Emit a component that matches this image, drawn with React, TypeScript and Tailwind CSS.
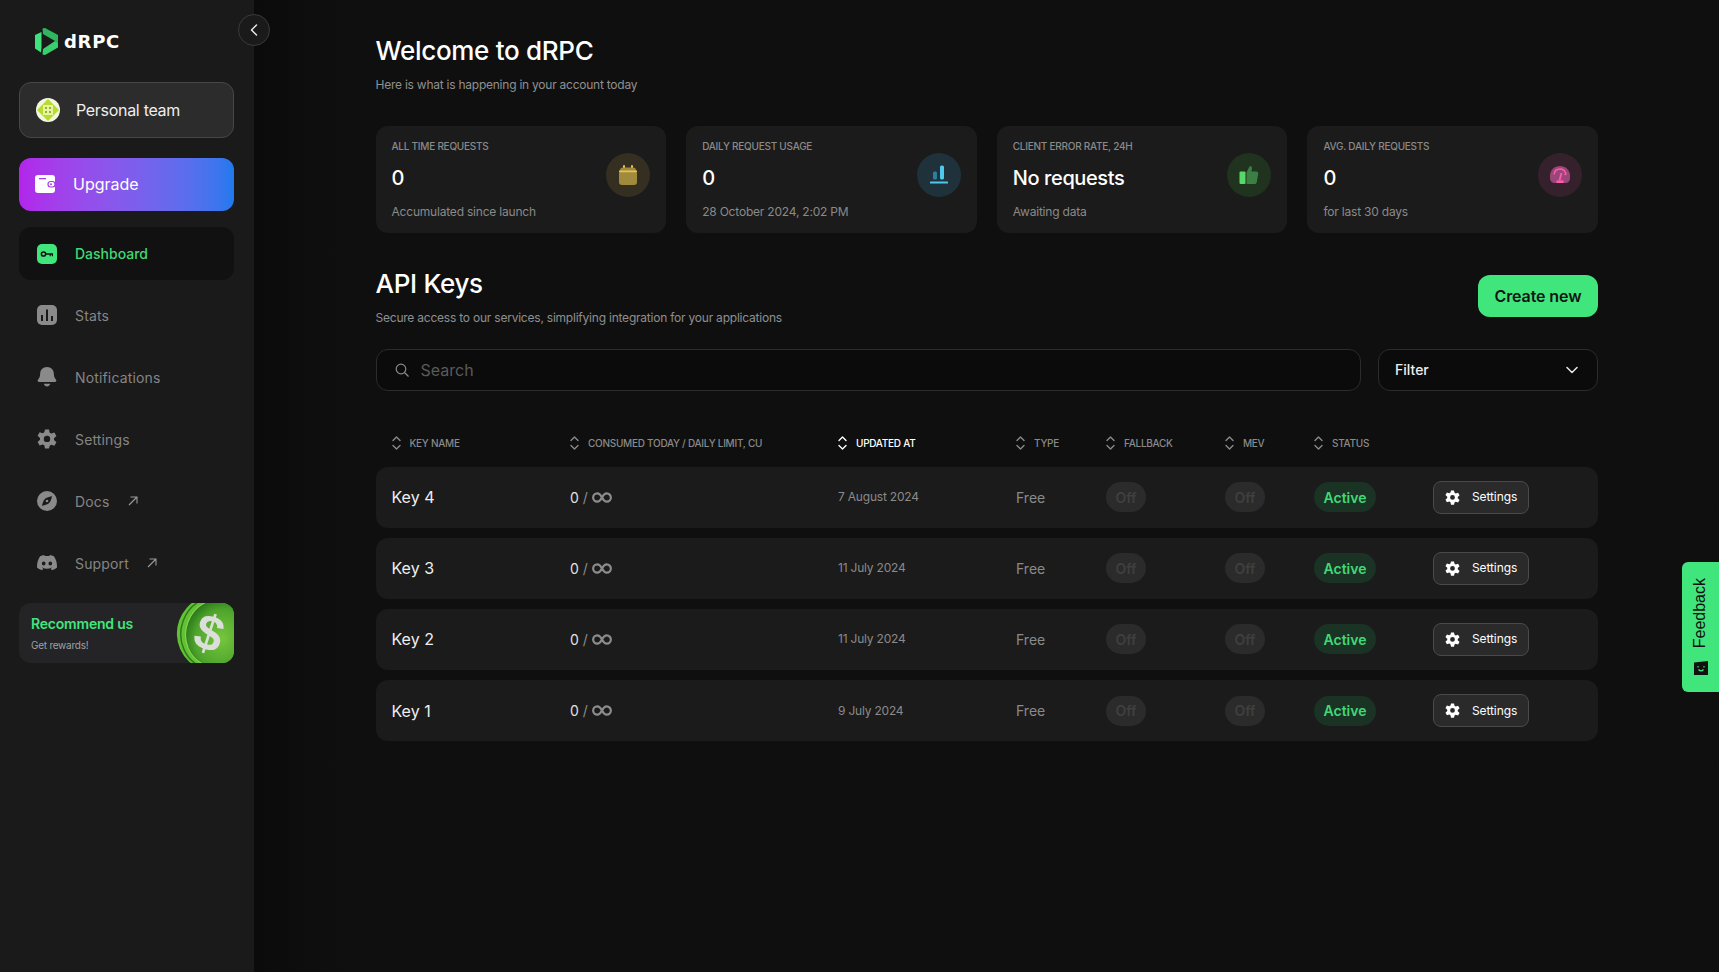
import React from "react";

const Sort = ({ on = false }: { on?: boolean }) => (
  <svg width="9" height="14" viewBox="0 0 9 14" fill="none" stroke={on ? "#ffffff" : "#8a8a8a"} strokeWidth="1.4" strokeLinecap="round" strokeLinejoin="round" className="shrink-0">
    <path d="M1 4.5 4.5 1 8 4.5" />
    <path d="M1 9.5 4.5 13 8 9.5" />
  </svg>
);

const Gear = ({ size = 20, color = "#8a8a8a" }: { size?: number; color?: string }) => (
  <svg width={size} height={size} viewBox="2 2 20 20" fill={color} className="shrink-0">
    <path fillRule="evenodd" d="M10 1h4l.7 3.2 1.6.9 3.1-1 2 3.5-2.4 2.2v1.8l2.4 2.2-2 3.5-3.1-1-1.6.9L14 20h-4l-.7-3.2-1.6-.9-3.1 1-2-3.5L5 11.2V9.4L2.600 7.200l2-3.500 3.100 1 1.600-.9L10 1Zm2 6.200a3.200 3.200 0 1 0 0 6.400 3.200 3.200 0 0 0 0-6.400Z" transform="translate(0 1.500)" />
  </svg>
);

const NE = () => (
  <svg width="10" height="10" viewBox="0 0 10 10" fill="none" stroke="#9a9a9a" strokeWidth="1.1" className="shrink-0">
    <path d="M1 9 9 1M2.500 1H9v6.500" />
  </svg>
);

const Inf = () => (
  <svg width="20" height="11" viewBox="0 0 21 11" fill="none" stroke="#8c8c8c" strokeWidth="2.300">
    <path d="M10.500 5.500C9 2.500 7.500 1.200 5.500 1.200a4.300 4.300 0 0 0 0 8.600c2 0 3.500-1.300 5-4.300Zm0 0c1.500-3 3-4.300 5-4.300a4.300 4.300 0 0 1 0 8.600c-2 0-3.500-1.300-5-4.300Z" />
  </svg>
);

const Logo = () => (
  <svg width="24" height="27" viewBox="0 0 24 27" className="shrink-0">
    <path d="M0 7 6.500 4V19L6 24.500 0 20.500Z" fill="#41e27c" />
    <path d="M7.500 0.500 10 0 23 7V14.500L20 13 8 6Z" fill="#2fb75f" />
    <path d="M7.500 26.500 10 27 23 19.500V14.500L20 13 8 21Z" fill="#39cf6e" />
  </svg>
);

const DashIcon = () => (
  <svg width="20" height="20" viewBox="0 0 20 20" className="shrink-0">
    <rect width="20" height="20" rx="5" fill="#40e67c" />
    <circle cx="6.500" cy="10" r="2.100" fill="none" stroke="#111" strokeWidth="1.500" />
    <path d="M8.500 9.300h7.500v3h-1.200v-1.500h-1v1.500h-1.200v-1.500H8.500Z" fill="#111" />
  </svg>
);
const StatsIcon = () => (
  <svg width="20" height="20" viewBox="0 0 20 20" className="shrink-0">
    <rect width="20" height="20" rx="5" fill="#8a8a8a" />
    <path d="M5 10v6M10 4.500V16M15 11v5" stroke="#1a1a1a" strokeWidth="2" />
  </svg>
);
const BellIcon = () => (
  <svg width="20" height="20" viewBox="0 0 20 20" fill="#8a8a8a" className="shrink-0">
    <path d="M10 0c4.300 0 6.800 3 6.800 6.500 0 3.500 1.300 5 2.300 6.300.7 1-.1 2.200-1.200 2.200H2.100c-1.100 0-1.900-1.200-1.200-2.200 1-1.300 2.300-2.800 2.300-6.300C3.200 3 5.700 0 10 0Z" />
    <path d="M6.800 16.800h6.400c-.5 1.800-1.700 2.700-3.200 2.700s-2.700-.9-3.200-2.700Z" />
  </svg>
);
const DocsIcon = () => (
  <svg width="20" height="20" viewBox="0 0 20 20" className="shrink-0">
    <circle cx="10" cy="10" r="10" fill="#8a8a8a" />
    <path d="M15 5c-.5 3.500-2 6.500-3.500 7.500S8 14 5 15c.5-3.500 2-6.500 3.500-7.500S12 6 15 5Z" fill="#1a1a1a" />
    <circle cx="10" cy="10" r="1.300" fill="#8a8a8a" />
  </svg>
);
const DiscordIcon = () => (
  <svg width="20" height="16" viewBox="0 0 20 16" fill="#8a8a8a" className="shrink-0">
    <path fillRule="evenodd" d="M16.900 1.300A16.500 16.500 0 0 0 12.800 0l-.5 1.100a15 15 0 0 0-4.600 0L7.200 0a16.500 16.500 0 0 0-4.100 1.300C.5 5.200-.2 9 .1 12.700A16.500 16.500 0 0 0 5.200 15.300l1-1.700-1.600-.8.400-.3a11.800 11.800 0 0 0 10 0l.4.300-1.600.8 1 1.700a16.500 16.500 0 0 0 5.100-2.600c.4-4.300-.7-8-3-11.400ZM6.700 10.500c-1 0-1.800-.9-1.800-2s.8-2 1.800-2 1.800.9 1.800 2-.8 2-1.800 2Zm6.600 0c-1 0-1.800-.9-1.800-2s.8-2 1.800-2 1.800.9 1.800 2-.8 2-1.800 2Z" />
  </svg>
);

const Coin = () => (
  <svg width="76" height="78" viewBox="0 0 76 78" className="absolute right-[-18px] top-[-9px]">
    <defs>
      <radialGradient id="coinFill" cx="0.6" cy="0.55" r="0.6">
        <stop offset="0" stopColor="#76c53e" />
        <stop offset="0.7" stopColor="#4fa52c" />
        <stop offset="1" stopColor="#2c7a1c" />
      </radialGradient>
    </defs>
    <ellipse cx="38" cy="39" rx="37" ry="38" fill="#62c234" transform="rotate(20 38 39)" />
    <ellipse cx="40" cy="39" rx="35" ry="37" fill="none" stroke="#2f7a1c" strokeWidth="1.500" transform="rotate(20 40 39)" />
    <ellipse cx="41" cy="39" rx="31" ry="34" fill="url(#coinFill)" stroke="#8ad84f" strokeWidth="1" transform="rotate(20 41 39)" />
    <text x="33" y="56" fontFamily="'Liberation Sans', sans-serif" fontWeight="700" fontSize="50" fill="#dcdfd9" textAnchor="middle" transform="rotate(18 33 40)">$</text>
  </svg>
);

const Avatar = () => (
  <svg width="24" height="24" viewBox="0 0 24 24" className="shrink-0">
    <circle cx="12" cy="12" r="12" fill="#f3f6df" />
    <path d="M12 1 23 12 12 23 1 12Z" fill="#b5dc2e" />
    <rect x="7" y="7" width="10" height="10" fill="#e9f3a5" />
    <g fill="#8fb51f">
      <rect x="9" y="9" width="2" height="2" />
      <rect x="13" y="9" width="2" height="2" />
      <rect x="9" y="13" width="2" height="2" />
      <rect x="13" y="13" width="2" height="2" />
    </g>
  </svg>
);

const Wallet = () => (
  <svg width="20" height="18" viewBox="0 0 20 18" className="shrink-0">
    <path d="M3 0h14a3 3 0 0 1 3 3v12a3 3 0 0 1-3 3H3a3 3 0 0 1-3-3V3a3 3 0 0 1 3-3Z" fill="#fff" />
    <rect x="4" y="3" width="7" height="1.300" fill="#a63cec" />
    <rect x="13" y="6.500" width="7" height="5.500" rx="2.700" fill="#fff" stroke="#a63cec" strokeWidth="1.200" />
    <circle cx="16" cy="9.200" r="1" fill="#a63cec" />
  </svg>
);

const CalIcon = () => (
  <svg width="20" height="20" viewBox="0 0 20 20" className="shrink-0">
    <rect x="5" y="0" width="2" height="4" rx="1" fill="#e8c24f" />
    <rect x="13" y="0" width="2" height="4" rx="1" fill="#e8c24f" />
    <path d="M2 5.500a3 3 0 0 1 3-3h10a3 3 0 0 1 3 3V8H2Z" fill="#a08a3e" />
    <rect x="1" y="5.500" width="18" height="2" fill="#e8c24f" />
    <path d="M1 7.500h18V17a3 3 0 0 1-3 3H4a3 3 0 0 1-3-3Z" fill="#a08a3e" />
  </svg>
);
const BarsIcon = () => (
  <svg width="20" height="20" viewBox="0 0 20 20" className="shrink-0">
    <rect x="4" y="6.500" width="4" height="8" rx="1.500" fill="#2d7f9c" />
    <rect x="11" y="0.500" width="4" height="14" rx="1.500" fill="#4fc8ee" />
    <rect x="1" y="16.500" width="18" height="2" rx="0.500" fill="#4fc8ee" />
  </svg>
);
const ThumbIcon = () => (
  <svg width="20" height="20" viewBox="0 0 20 20" className="shrink-0">
    <rect x="0.500" y="6.500" width="6" height="12.500" rx="1" fill="#56d966" />
    <path d="M7.500 7.500 10.500 1.500c1.500-.6 2.600.4 2.400 1.900L12.500 6.500h4.800c1.300 0 2.100 1 1.900 2.200l-1.400 8.200c-.2 1.200-1.100 2.100-2.300 2.100H7.500Z" fill="#3c7f45" />
  </svg>
);
const GaugeIcon = () => (
  <svg width="20" height="20" viewBox="0 0 20 20" className="shrink-0" fill="none">
    <path d="M0 11C0 5 4.500 1 10 1s10 4 10 10v2c0 3-2 5-5 5H5c-3 0-5-2-5-5Z" fill="#9a4678" />
    <path d="M4 9.500C4.500 6 7 4 10 4s5 2 6 4.800L14.500 10" stroke="#ff5cae" strokeWidth="1.500" />
    <path d="M11.500 8 9.500 15.500" stroke="#ff5cae" strokeWidth="1.800" />
    <rect x="6.500" y="15.500" width="7" height="2.500" fill="#ff5cae" />
  </svg>
);

const cards = [
  { l: "All time requests", v: "0", d: "Accumulated since launch", bg: "bg-[#342f20]", i: <CalIcon /> },
  { l: "Daily request usage", v: "0", d: "28 October 2024, 2:02 PM", bg: "bg-[#1f313b]", i: <BarsIcon /> },
  { l: "Client error rate, 24h", v: "No requests", d: "Awaiting data", bg: "bg-[#20331f]", i: <ThumbIcon /> },
  { l: "Avg. daily requests", v: "0", d: "for last 30 days", bg: "bg-[#35212c]", i: <GaugeIcon /> },
];

const heads = [
  { t: "Key name" },
  { t: "Consumed today / daily limit, CU" },
  { t: "Updated at", on: true },
  { t: "Type" },
  { t: "Fallback" },
  { t: "MEV" },
  { t: "Status" },
];

const rows = [
  { n: "Key 4", d: "7 August 2024" },
  { n: "Key 3", d: "11 July 2024" },
  { n: "Key 2", d: "11 July 2024" },
  { n: "Key 1", d: "9 July 2024" },
];

const gridCols = "grid grid-cols-[178.5px_268px_178px_90px_119px_89px_119px_1fr] items-center";

const Nav = ({ icon, label, ext = false }: { icon: React.ReactNode; label: string; ext?: boolean }) => (
  <div className="h-[54px] pl-[18px] flex items-center mt-2">
    <div className="w-5 flex justify-center">{icon}</div>
    <span className="ml-[18px] text-[14px] tracking-[0.15px] text-[#858585]">{label}</span>
    {ext && <span className="ml-[18px]"><NE /></span>}
  </div>
);

const Off = () => (
  <span className="w-10 h-[30px] rounded-full bg-[#2b2b2b] flex items-center justify-center text-[14px] font-semibold text-[#3f3f3f]">Off</span>
);

export default function App() {
  return (
    <div className="relative flex h-[972px] w-[1719px] overflow-hidden bg-[#0f0f0f] font-['Inter',sans-serif] text-white">
      <aside className="w-[254px] shrink-0 bg-[#1a1a1a] pl-[19px] pr-[20px] pt-[28px]">
        <div className="flex items-center gap-[3px] pl-4 h-[27px]">
          <Logo />
          <span className="ml-[2px] text-[18px] font-bold tracking-[0.7px] text-white font-['DejaVu_Sans',sans-serif]">dRPC</span>
        </div>
        <div className="mt-[27px] h-[56px] rounded-xl border border-[#474747] bg-[#2c2c2c] flex items-center pl-4">
          <Avatar />
          <span className="ml-[16px] text-[16px] tracking-[-0.3px] text-[#eeeeee]">Personal team</span>
        </div>
        <div className="mt-5 h-[53px] rounded-xl bg-gradient-to-r from-[#b224ea] to-[#1f79ee] flex items-center pl-4 pb-[2px]">
          <Wallet />
          <span className="ml-[18px] text-[16px] text-white">Upgrade</span>
        </div>
        <div className="mt-4 h-[53px] rounded-xl bg-[#111111] pl-[18px] flex items-center">
          <DashIcon />
          <span className="ml-[18px] text-[14px] font-medium text-[#40d975]">Dashboard</span>
        </div>
        <Nav icon={<StatsIcon />} label="Stats" />
        <Nav icon={<BellIcon />} label="Notifications" />
        <Nav icon={<Gear />} label="Settings" />
        <Nav icon={<DocsIcon />} label="Docs" ext />
        <Nav icon={<DiscordIcon />} label="Support" ext />
        <div className="relative mt-[13px] h-[60px] rounded-xl bg-[#242427] overflow-hidden pl-3 pt-[11px]">
          <div className="text-[14px] font-semibold leading-5 tracking-[-0.2px] text-[#40e67c]">Recommend us</div>
          <div className="mt-[3px] text-[10px] leading-4 tracking-[-0.25px] text-[#a0a0a0]">Get rewards!</div>
          <Coin />
        </div>
      </aside>

      <button className="absolute left-[238px] top-[14px] w-8 h-8 rounded-full border border-[#3a3a3a] bg-[#1a1a1a] flex items-center justify-center">
        <svg width="8" height="12" viewBox="0 0 8 12" fill="none" stroke="#e8e8e8" strokeWidth="1.500" strokeLinecap="round" strokeLinejoin="round"><path d="M6.500 1 1.500 6l5 5" /></svg>
      </button>

      <main className="flex-1 pl-[121.5px] pr-[121px] pt-[32px] bg-gradient-to-r from-[#0b0b0b] to-[#0f0f0f] from-0% to-[6%]">
        <h1 className="text-[26px] leading-[38px] font-medium tracking-[-0.3px]">Welcome to dRPC</h1>
        <p className="mt-[5px] text-[12px] leading-5 tracking-[-0.24px] text-[#8f8f8f]">Here is what is happening in your account today</p>

        <div className="mt-[31px] grid grid-cols-4 gap-5">
          {cards.map((c) => (
            <div key={c.l} className="h-[107px] rounded-xl bg-[#1b1b1b] pl-4 pr-4 pt-[13px] flex justify-between">
              <div>
                <div className="text-[10px] leading-[14px] uppercase font-medium tracking-[-0.25px] text-[#8a8a8a]">{c.l}</div>
                <div className="mt-[11px] text-[20px] leading-[28px] font-medium tracking-[-0.4px] text-white">{c.v}</div>
                <div className="mt-[11px] text-[12px] leading-[18px] tracking-[-0.2px] text-[#8a8a8a]">{c.d}</div>
              </div>
              <div className={`mt-[14px] w-11 h-11 rounded-full flex items-center justify-center ${c.bg}`}>{c.i}</div>
            </div>
          ))}
        </div>

        <div className="mt-[33px] flex justify-between items-start">
          <div>
            <h2 className="text-[26px] leading-[36px] font-medium tracking-[-0.3px]">API Keys</h2>
            <p className="mt-[6px] text-[12px] leading-5 tracking-[-0.22px] text-[#8f8f8f]">Secure access to our services, simplifying integration for your applications</p>
          </div>
          <button className="mt-[9px] w-[120px] h-[42px] rounded-xl bg-[#40e67c] text-[#141414] text-[16px] font-semibold tracking-[-0.1px]">Create new</button>
        </div>

        <div className="mt-[21px] flex gap-[17px]">
          <div className="flex-1 h-[42px] rounded-xl border border-[#2c2c2c] bg-[#0b0b0b] flex items-center pl-[18px]">
            <svg width="14" height="14" viewBox="0 0 14 14" fill="none" stroke="#8a8a8a" strokeWidth="1.200"><circle cx="6" cy="6" r="4.800" /><path d="m9.500 9.500 4 4" /></svg>
            <span className="ml-[12px] text-[16px] text-[#5a5a5a]">Search</span>
          </div>
          <div className="w-[220px] h-[42px] rounded-xl border border-[#2c2c2c] bg-[#0b0b0b] flex items-center justify-between pl-4 pr-[19px] pb-px">
            <span className="text-[14px] font-medium text-[#eeeeee]">Filter</span>
            <svg width="12" height="8" viewBox="0 0 12 8" fill="none" stroke="#e8e8e8" strokeWidth="1.500" strokeLinecap="round" strokeLinejoin="round"><path d="m1 1.500 5 5 5-5" /></svg>
          </div>
        </div>

        <div className={`${gridCols} mt-[41px] h-[22px] pl-4`}>
          {heads.map((h) => (
            <div key={h.t} className="flex items-center gap-[9px]">
              <Sort on={h.on} />
              <span className={`text-[10px] font-medium uppercase tracking-[-0.27px] ${h.on ? "text-white" : "text-[#8a8a8a]"}`}>{h.t}</span>
            </div>
          ))}
        </div>

        <div className="mt-[12.7px] flex flex-col gap-[10px]">
          {rows.map((r) => (
            <div key={r.n} className={`${gridCols} h-[61.1px] rounded-xl bg-[#1b1b1b] pl-4`}>
              <span className="text-[16px] text-[#efefef]">{r.n}</span>
              <span className="flex items-center gap-[4px] text-[14px] text-[#e0e0e0]">0 <span className="text-[#8c8c8c]">/</span> <Inf /></span>
              <span className="text-[12px] tracking-[-0.2px] text-[#8a8a8a]">{r.d}</span>
              <span className="text-[14px] text-[#8a8a8a]">Free</span>
              <Off />
              <Off />
              <span className="w-[62px] h-[30px] rounded-full bg-[#1a3325] flex items-center justify-center text-[14px] font-semibold text-[#40d975]">Active</span>
              <button className="w-[96px] h-[33px] rounded-lg border border-[#4a4a4a] bg-[#2a2a2a] flex items-center pl-[11px]">
                <Gear size={15} color="#ffffff" />
                <span className="ml-[12px] text-[12px] tracking-[-0.1px] text-white">Settings</span>
              </button>
            </div>
          ))}
        </div>
      </main>

      <div className="absolute right-0 top-[562px] w-[37px] h-[130px] rounded-l-md bg-[#40e67c] flex flex-col items-center justify-end pb-[17px] pr-[2px] gap-[13px]">
        <span className="font-['Liberation_Sans',sans-serif] text-[16px] text-[#111] [writing-mode:vertical-rl] rotate-180">Feedback</span>
        <svg width="14" height="14" viewBox="0 0 14 14" className="shrink-0 ml-[2px]">
          <path d="M0 1.500 14 0v14H0Z" fill="#111" />
          <path d="M4 5v1.500M10 5v1.500M4.500 8.500c1.500 1.800 3.500 1.800 5 0" stroke="#40e67c" strokeWidth="1.200" fill="none" />
        </svg>
      </div>
    </div>
  );
}
